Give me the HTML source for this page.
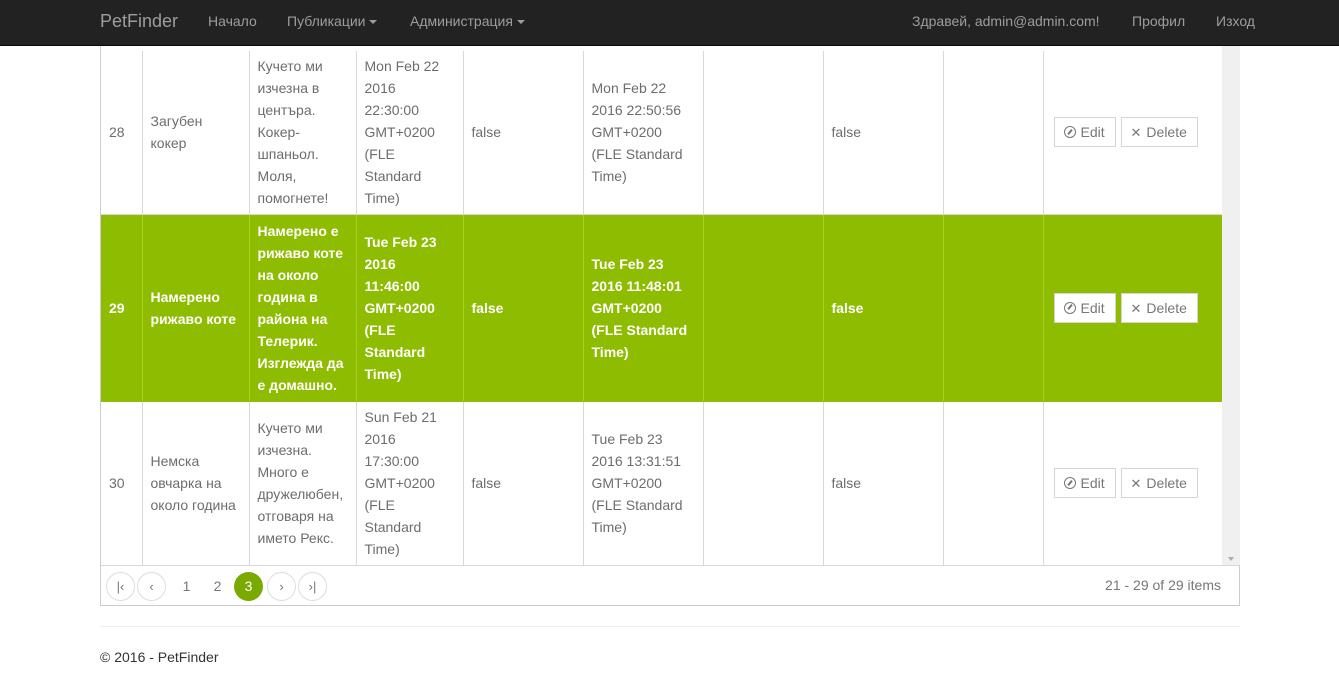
<!DOCTYPE html>
<html><head><meta charset="utf-8"><style>
*{box-sizing:border-box;margin:0;padding:0}
body{width:1339px;height:673px;overflow:hidden;background:#fff;font-family:"Liberation Sans",sans-serif;font-size:14px;color:#333;position:relative}
.nav{position:absolute;left:0;top:0;width:1339px;height:46px;background:#222;border-bottom:1px solid #080808}
.nav span{position:absolute;top:13px;color:#9d9d9d;font-size:14px}
.caret{display:inline-block;width:0;height:0;border-left:4px solid transparent;border-right:4px solid transparent;border-top:4px solid #9d9d9d;vertical-align:middle;margin-left:4px}
.grid{position:absolute;left:100px;top:46px;width:1140px;height:560px;border:1px solid #ccc;border-top:none}
.sb{position:absolute;left:1121px;top:0;width:18px;height:519px;background:#f0f0f0}
table{position:absolute;left:0;top:5px;border-collapse:collapse;table-layout:fixed;width:1121px}
td{border-left:1px solid #d8d8d8;border-bottom:1px solid #d8d8d8;padding:0 8px;line-height:22px;color:#6d6d6d;vertical-align:middle}
td:first-child{border-left:none}
tr.sel td{background:#8ebc00;color:#fff;font-weight:bold;border-left-color:#a8d21e;border-bottom-color:#8ebc00}
.btn{display:inline-block;height:30px;line-height:28px;border:1px solid #d5d5d5;background:#fff;color:#777;padding:0 10px 0 9px;font-weight:normal;margin-right:1px}
.ic{display:inline-block;width:12px;height:12px;border:1.3px solid #777;border-radius:50%;vertical-align:-1px;margin-right:5px;position:relative}
.ic:after{content:"";position:absolute;left:4px;top:1.5px;width:2px;height:6px;background:#777;transform:rotate(40deg)}
.x{margin-right:5px;font-size:13px}
.pager{position:absolute;left:0;top:519px;width:1138px;height:40px;border-top:1px solid #d8d8d8}
.pg{position:absolute;top:6px;width:29px;height:29px;border:1px solid #ddd;border-radius:50%;text-align:center;line-height:27px;color:#777;font-size:13px}
.pn{position:absolute;top:6px;width:29px;height:29px;text-align:center;line-height:29px;color:#777}
.cur{background:#7aa900;color:#fff;border-radius:50%}
</style></head><body>
<div class="nav">
<span style="left:100px;top:11px;font-size:18px">PetFinder</span>
<span style="left:208px">Начало</span>
<span style="left:287px">Публикации<i class="caret"></i></span>
<span style="left:410px">Администрация<i class="caret"></i></span>
<span style="left:912px">Здравей, admin@admin.com!</span>
<span style="left:1132px">Профил</span>
<span style="left:1216px">Изход</span>
</div>
<div class="grid">
<div class="sb"><div style="position:absolute;left:6px;bottom:4px;border-left:3px solid transparent;border-right:3px solid transparent;border-top:4px solid #aaa"></div></div>
<table>
<colgroup><col style="width:41px"><col style="width:107px"><col style="width:107px"><col style="width:107px"><col style="width:120px"><col style="width:120px"><col style="width:120px"><col style="width:120px"><col style="width:100px"><col style="width:179px"></colgroup>
<tr style="height:163px"><td>28</td><td>Загубен кокер</td><td>Кучето ми изчезна в центъра. Кокер-шпаньол. Моля, помогнете!</td><td>Mon Feb 22<br>2016<br>22:30:00<br>GMT+0200<br>(FLE<br>Standard<br>Time)</td><td>false</td><td>Mon Feb 22 2016 22:50:56 GMT+0200 (FLE Standard Time)</td><td></td><td>false</td><td></td><td style="padding-left:10px"><span class="btn"><i class="ic"></i>Edit</span> <span class="btn"><span class="x">✕</span>Delete</span></td></tr>
<tr class="sel" style="height:187px"><td>29</td><td>Намерено рижаво коте</td><td>Намерено е рижаво коте на около година в района на Телерик. Изглежда да е домашно.</td><td>Tue Feb 23<br>2016<br>11:46:00<br>GMT+0200<br>(FLE<br>Standard<br>Time)</td><td>false</td><td>Tue Feb 23 2016 11:48:01 GMT+0200 (FLE Standard Time)</td><td></td><td>false</td><td></td><td style="padding-left:10px"><span class="btn"><i class="ic"></i>Edit</span> <span class="btn"><span class="x">✕</span>Delete</span></td></tr>
<tr style="height:164px"><td>30</td><td>Немска овчарка на около година</td><td>Кучето ми изчезна. Много е дружелюбен, отговаря на името Рекс.</td><td>Sun Feb 21<br>2016<br>17:30:00<br>GMT+0200<br>(FLE<br>Standard<br>Time)</td><td>false</td><td>Tue Feb 23 2016 13:31:51 GMT+0200 (FLE Standard Time)</td><td></td><td>false</td><td></td><td style="padding-left:10px"><span class="btn"><i class="ic"></i>Edit</span> <span class="btn"><span class="x">✕</span>Delete</span></td></tr>
</table>
<div class="pager">
<div class="pg" style="left:5px">|‹</div>
<div class="pg" style="left:36px">‹</div>
<div class="pn" style="left:71px">1</div>
<div class="pn" style="left:102px">2</div>
<div class="pn cur" style="left:133px">3</div>
<div class="pg" style="left:166px">›</div>
<div class="pg" style="left:197px">›|</div>
<div style="position:absolute;right:18px;top:11px;color:#777">21 - 29 of 29 items</div>
</div>
</div>
<div style="position:absolute;left:100px;top:626px;width:1140px;border-top:1px solid #eee"></div>
<div style="position:absolute;left:100px;top:649px;color:#333">© 2016 - PetFinder</div>
</body></html>
